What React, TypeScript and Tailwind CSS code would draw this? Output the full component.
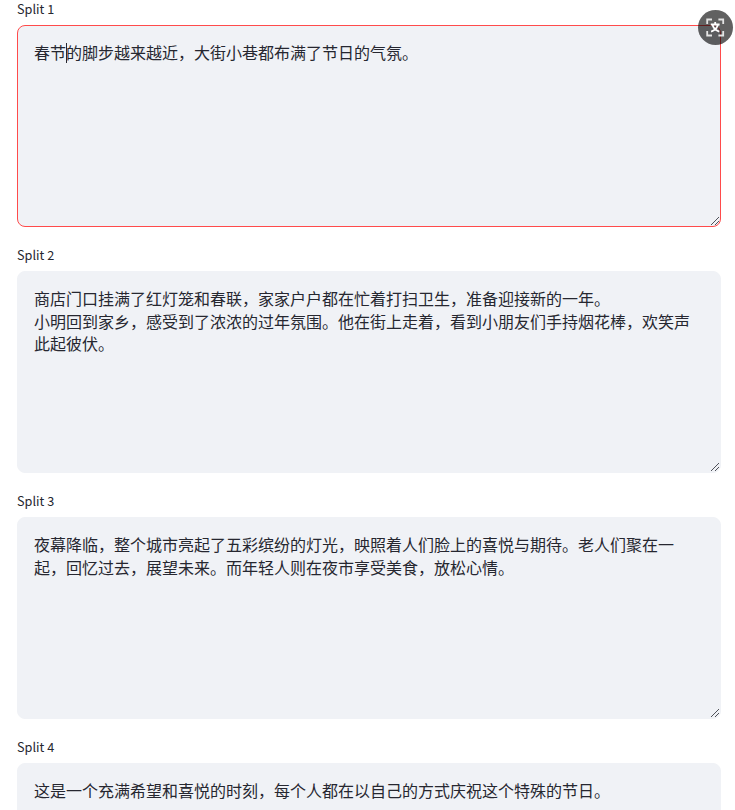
import React from "react";

const splits = [
  "春节的脚步越来越近，大街小巷都布满了节日的气氛。",
  "商店门口挂满了红灯笼和春联，家家户户都在忙着打扫卫生，准备迎接新的一年。\n小明回到家乡，感受到了浓浓的过年氛围。他在街上走着，看到小朋友们手持烟花棒，欢笑声此起彼伏。",
  "夜幕降临，整个城市亮起了五彩缤纷的灯光，映照着人们脸上的喜悦与期待。老人们聚在一起，回忆过去，展望未来。而年轻人则在夜市享受美食，放松心情。",
  "这是一个充满希望和喜悦的时刻，每个人都在以自己的方式庆祝这个特殊的节日。",
];

const ResizeHandle: React.FC = () => (
  <svg
    className="absolute right-0 bottom-0 size-[10px]"
    viewBox="0 0 10 10"
    stroke="#50525a"
    fill="none"
  >
    <path d="M1 9 9 1M5 9 9 5" />
  </svg>
);

const SplitField: React.FC<{ index: number; text: string }> = ({
  index,
  text,
}) => {
  const focused = index === 0;

  return (
    <div className="h-[246px]">
      <label className="flex h-[25px] items-start text-[12.7px] leading-[17px]">
        Split {index + 1}
      </label>
      <div
        className={`relative h-[202px] rounded-lg border bg-[#f0f2f6] px-[16px] py-[15.4px] ${
          focused ? "border-[#ff4b4b]" : "border-[#f0f2f6]"
        }`}
      >
        <p className="text-[16px] leading-[22.4px] break-all whitespace-pre-wrap">
          {focused ? (
            <>
              {text.slice(0, 2)}
              <span className="relative">
                <span className="absolute top-[3px] left-0 h-[20px] w-px bg-[#262730]" />
              </span>
              {text.slice(2)}
            </>
          ) : (
            text
          )}
        </p>
        <ResizeHandle />
      </div>
    </div>
  );
};

const TranslateButton: React.FC = () => (
  <button className="absolute top-[10px] left-[698px] flex size-[35px] items-center justify-center rounded-full bg-black/62">
    <svg
      className="size-[19px]"
      viewBox="0 0 19 19"
      fill="none"
      stroke="#e4e4e4"
      strokeWidth="1.8"
    >
      <path d="M1.200 6V1.500h4.800M12.400 1.500h4.800v4.500M17.200 13v4.500h-4.800M6 17.500H1.200v-4.500" />
      <path
        d="M9.200 4v2.500M4.800 6.500h8.800M6.500 7c1 3 3 5.300 6.800 6.600M11.900 7c-1 3-3 5.300-6.800 6.600"
        stroke="white"
      />
    </svg>
  </button>
);

export default function App() {
  return (
    <main className="relative h-[810px] w-[735px] overflow-hidden bg-white pr-[14px] pl-[17px] font-['Noto_Sans_CJK_SC','Noto_Sans',sans-serif] text-[#262730]">
      {splits.map((text, index) => (
        <SplitField key={index} index={index} text={text} />
      ))}
      <TranslateButton />
    </main>
  );
}
